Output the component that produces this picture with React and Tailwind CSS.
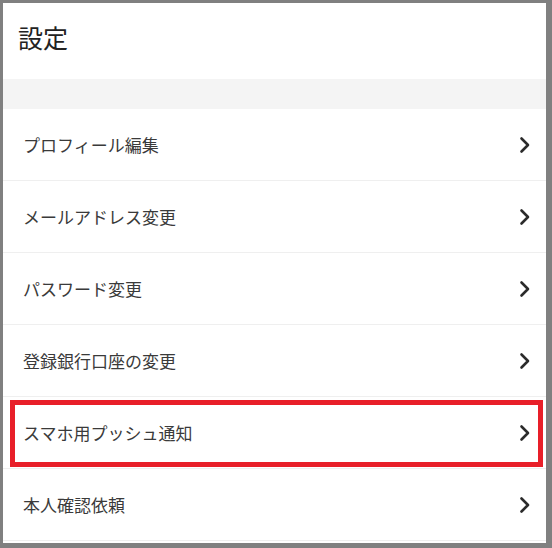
import React from "react";

const items = [
  "プロフィール編集",
  "メールアドレス変更",
  "パスワード変更",
  "登録銀行口座の変更",
  "スマホ用プッシュ通知",
  "本人確認依頼",
];

function Chevron() {
  return (
    <svg width="12" height="18" viewBox="0 0 12 18" className="shrink-0">
      <path d="M2.5 2.5 L9 9 L2.5 15.5" fill="none" stroke="#2b2b2b" strokeWidth="2.6" strokeLinecap="round" strokeLinejoin="round" />
    </svg>
  );
}

export default function App() {
  return (
    <div
      className="w-[552px] h-[548px] bg-[#808080] pl-[3px] pt-[3px] pr-[6px] pb-[5px]"
      style={{ fontFamily: '"Noto Sans CJK JP", "Noto Sans", sans-serif' }}
    >
      <div className="relative w-full h-full bg-white flex flex-col overflow-hidden">
        <div className="h-[76px] flex items-center pl-[15px] pb-[6px] text-[25px] text-[#222]">
          設定
        </div>
        <div className="h-[30px] bg-[#f4f4f4]" />
        {items.map((t) => (
          <div key={t} className="h-[72px] shrink-0 flex items-center justify-between pl-[20px] pr-[15px] border-b border-[#efefef]">
            <span className="text-[17px] text-[#3a3a3a]">{t}</span>
            <Chevron />
          </div>
        ))}
        <div className="absolute left-[7px] top-[397px] w-[533px] h-[67px] border-[5px] border-[#e81f29]" />
      </div>
    </div>
  );
}
